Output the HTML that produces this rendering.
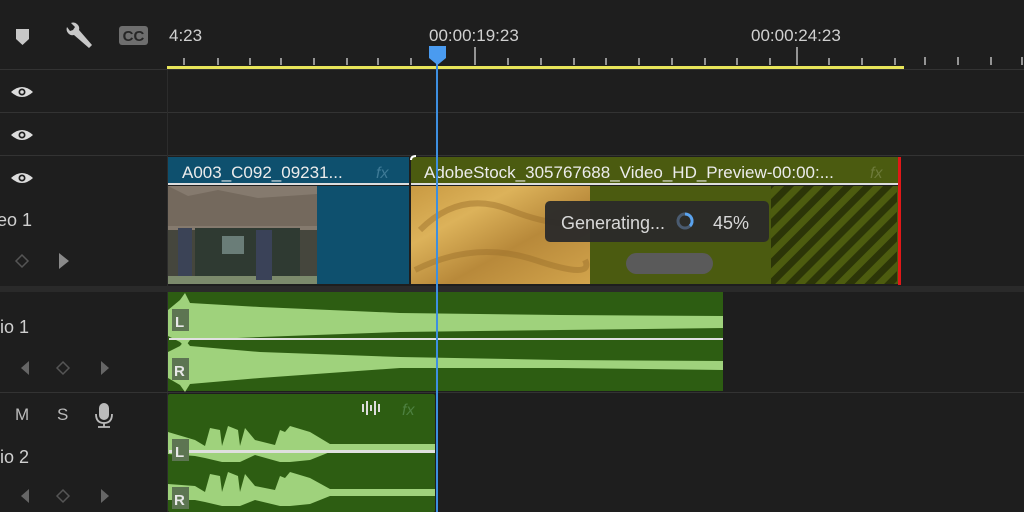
<!DOCTYPE html>
<html><head><meta charset="utf-8"><style>
html,body{margin:0;padding:0;background:#1e1e1e;width:1024px;height:512px;overflow:hidden}
svg{display:block}
text{font-family:"Liberation Sans",sans-serif}
</style></head><body>
<svg width="1024" height="512" viewBox="0 0 1024 512" xmlns="http://www.w3.org/2000/svg">
<defs>
<pattern id="st" width="14" height="14" patternUnits="userSpaceOnUse" patternTransform="rotate(45)">
<rect width="14" height="14" fill="#4d5c0f"/><rect width="7" height="14" fill="#2c3508"/></pattern>
<linearGradient id="gold" x1="0" y1="0" x2="1" y2="1"><stop offset="0" stop-color="#c99a42"/><stop offset="0.3" stop-color="#dcb25a"/><stop offset="0.6" stop-color="#b8893a"/><stop offset="1" stop-color="#d2a44c"/></linearGradient>
</defs>
<rect width="1024" height="512" fill="#1e1e1e"/>
<path d="M16 29h13v10l-6.5 6-6.5-6z" fill="#c8c8c8"/>
<path d="M67 27a6 6 0 0 0 7 8l15 13 3-3-13-15a6 6 0 0 0-8-7l4 4-2 3-3 1z" fill="#c8c8c8"/>
<rect x="119" y="26" width="29" height="19" rx="3" fill="#6e6e6e"/>
<text x="133.5" y="41" font-size="15" font-weight="bold" fill="#262626" text-anchor="middle">CC</text>
<text x="169" y="41" font-size="17" fill="#d0d0d0">4:23</text>
<text x="429" y="41" font-size="17" fill="#d0d0d0">00:00:19:23</text>
<text x="751" y="41" font-size="17" fill="#d0d0d0">00:00:24:23</text>
<g stroke="#bbb" stroke-width="1.5">
<path d="M184 58v7M218 58v7M250 58v7M281 58v7M314 58v7M347 58v7M378 58v7M411 58v7M475 47v18M508 58v7M541 58v7M574 58v7M606 58v7M639 58v7M672 58v7M705 58v7M737 58v7M770 58v7M797 47v18M829 58v7M862 58v7M895 58v7M925 57v8M958 57v8M991 57v8M1022 57v8"/>
</g>
<rect x="167" y="66" width="737" height="4" fill="#e8e55a"/>
<rect x="0" y="69" width="1024" height="1" fill="#333"/>
<rect x="0" y="112" width="1024" height="1" fill="#333"/>
<rect x="0" y="155" width="1024" height="1" fill="#333"/>
<rect x="167" y="70" width="1" height="442" fill="#2c2c2c"/>
<g fill="#dcdcdc">
<path d="M11 92q11-10 22 0q-11 10-22 0z"/><path d="M11 135q11-10 22 0q-11 10-22 0z"/><path d="M11 178q11-10 22 0q-11 10-22 0z"/>
</g>
<g fill="#1e1e1e"><circle cx="22" cy="92" r="3.5"/><circle cx="22" cy="135" r="3.5"/><circle cx="22" cy="178" r="3.5"/></g>
<g fill="#dcdcdc"><circle cx="22" cy="92" r="1.8"/><circle cx="22" cy="135" r="1.8"/><circle cx="22" cy="178" r="1.8"/></g>
<text x="-3" y="226" font-size="18" fill="#d0d0d0">eo 1</text>
<path d="M22 255l6 6-6 6-6-6z" fill="none" stroke="#555" stroke-width="1.5"/>
<path d="M59 253l10 8-10 8z" fill="#8a8a8a"/>
<rect x="168" y="157" width="241" height="26" fill="#0e506e"/>
<text x="182" y="178" font-size="17" fill="#ececec">A003_C092_09231...</text>
<text x="376" y="178" font-size="16" font-style="italic" fill="#3e7a96">fx</text>
<rect x="168" y="183" width="241" height="2" fill="#ddd"/>
<rect x="168" y="186" width="241" height="98" fill="#0e506e"/>
<rect x="168" y="186" width="149" height="98" fill="#45463d"/>
<path d="M168 186h149v44H168z" fill="#857a6e"/>
<path d="M168 186l20 10 30-6 40 8 59-4v32H168z" fill="#74695d"/>
<rect x="195" y="228" width="105" height="53" fill="#2f3a32"/>
<rect x="222" y="236" width="22" height="18" fill="#6a7d78"/>
<rect x="168" y="276" width="149" height="8" fill="#7c8a6c"/>
<rect x="178" y="228" width="14" height="48" fill="#3b4356"/>
<rect x="256" y="230" width="16" height="50" fill="#3a4258"/>
<rect x="411" y="157" width="490" height="26" fill="#4b5b10"/>
<text x="424" y="178" font-size="17" fill="#ececec">AdobeStock_305767688_Video_HD_Preview-00:00:...</text>
<text x="870" y="178" font-size="16" font-style="italic" fill="#6d7a3a">fx</text>
<rect x="411" y="183" width="488" height="2" fill="#ddd"/>
<rect x="411" y="186" width="488" height="98" fill="#4b5b10"/>
<rect x="411" y="186" width="179" height="98" fill="url(#gold)"/>
<g fill="none" stroke="#9a6e2a" stroke-width="6" opacity="0.45"><path d="M420 230q40-40 90-20t80 10"/><path d="M415 270q60-30 120-10t50 0"/></g>
<rect x="771" y="186" width="126" height="98" fill="url(#st)"/>
<path d="M411 160q0-4 5-4" stroke="#fff" stroke-width="2" fill="none"/>
<rect x="898" y="157" width="3" height="128" fill="#e01818"/>
<rect x="545" y="201" width="224" height="41" rx="5" fill="#2a2a2a" opacity="0.95"/>
<text x="561" y="229" font-size="18" fill="#d8d8d8">Generating...</text>
<circle cx="685" cy="221" r="7" fill="none" stroke="#4a5b70" stroke-width="3"/>
<path d="M685 214a7 7 0 0 1 5 12" fill="none" stroke="#5aa3ee" stroke-width="3"/>
<text x="713" y="229" font-size="18" fill="#d8d8d8">45%</text>
<rect x="626" y="253" width="87" height="21" rx="10.5" fill="#5a5a5a"/>
<rect x="0" y="286" width="1024" height="6" fill="#2a2a2a"/>
<rect x="0" y="392" width="1024" height="1" fill="#333"/>
<text x="0" y="333" font-size="18" fill="#d0d0d0">io 1</text>
<path d="M29 361l-8 7 8 7z" fill="#666"/><path d="M63 362l6 6-6 6-6-6z" fill="none" stroke="#555" stroke-width="1.5"/><path d="M101 361l8 7-8 7z" fill="#666"/>
<rect x="168" y="292" width="555" height="99" fill="#2d5d12"/>
<path d="M168 310L180 300L185 293L190 303L260 307L400 313L560 315L723 316V328L560 330L400 332L260 337L190 340L185 347L180 342L168 336Z" fill="#9fd27c"/>
<path d="M168 352L180 346L185 340L190 346L260 352L400 357L560 360L723 361V370L560 368L400 368L260 378L190 384L185 392L180 385L168 378Z" fill="#9fd27c"/>
<rect x="169" y="338" width="554" height="2" fill="#e0e0e0"/>
<rect x="172" y="309" width="17" height="22" fill="#5d7552"/><text x="175" y="327" font-size="15" font-weight="bold" fill="#e8e8e8">L</text>
<rect x="172" y="358" width="17" height="22" fill="#5d7552"/><text x="174" y="376" font-size="15" font-weight="bold" fill="#e8e8e8">R</text>
<text x="15" y="420" font-size="17" fill="#bbb">M</text><text x="57" y="420" font-size="17" fill="#bbb">S</text>
<rect x="99" y="403" width="10" height="17" rx="5" fill="#bbb"/><path d="M96 414q0 9 8 9q8 0 8-9M104 423v4M98 427h12" stroke="#bbb" stroke-width="1.8" fill="none"/>
<text x="0" y="463" font-size="18" fill="#d0d0d0">io 2</text>
<path d="M29 489l-8 7 8 7z" fill="#666"/><path d="M63 490l6 6-6 6-6-6z" fill="none" stroke="#555" stroke-width="1.5"/><path d="M101 489l8 7-8 7z" fill="#666"/>
<rect x="168" y="394" width="267" height="118" rx="2" fill="#2d5d12"/>
<g fill="#9fd27c">
<path d="M168 432L195 440L205 446L210 428L220 430L222 446L228 426L238 430L240 446L245 428L255 440L275 445L280 430L285 432L290 426L310 432L330 444L435 444V452L330 452L310 460L290 462L280 462L255 455L240 462L222 462L205 458L195 456L168 454Z"/>
<path d="M168 484L195 486L205 492L210 474L220 476L222 492L228 472L238 476L240 492L245 474L255 486L275 490L280 476L285 478L290 472L310 478L330 489L435 489V496L330 496L310 504L290 506L280 506L255 500L240 506L222 506L205 502L195 500L168 500Z"/>
</g>
<rect x="169" y="450" width="266" height="3" fill="#e0e0e0"/>
<rect x="172" y="439" width="17" height="22" fill="#5d7552"/><text x="175" y="457" font-size="15" font-weight="bold" fill="#e8e8e8">L</text>
<rect x="172" y="487" width="17" height="22" fill="#5d7552"/><text x="174" y="505" font-size="15" font-weight="bold" fill="#e8e8e8">R</text>
<g fill="#dcdcdc"><rect x="362" y="404" width="2" height="8"/><rect x="366" y="401" width="2" height="14"/><rect x="370" y="405" width="2" height="6"/><rect x="374" y="401" width="2" height="14"/><rect x="378" y="404" width="2" height="8"/></g>
<text x="402" y="415" font-size="16" font-style="italic" fill="#4d8040">fx</text>
<rect x="436" y="60" width="2" height="452" fill="#3d8fe0"/>
<path d="M429 46h17v12l-8.5 7-8.5-7z" fill="#4a9bf0"/>
</svg>
</body></html>
